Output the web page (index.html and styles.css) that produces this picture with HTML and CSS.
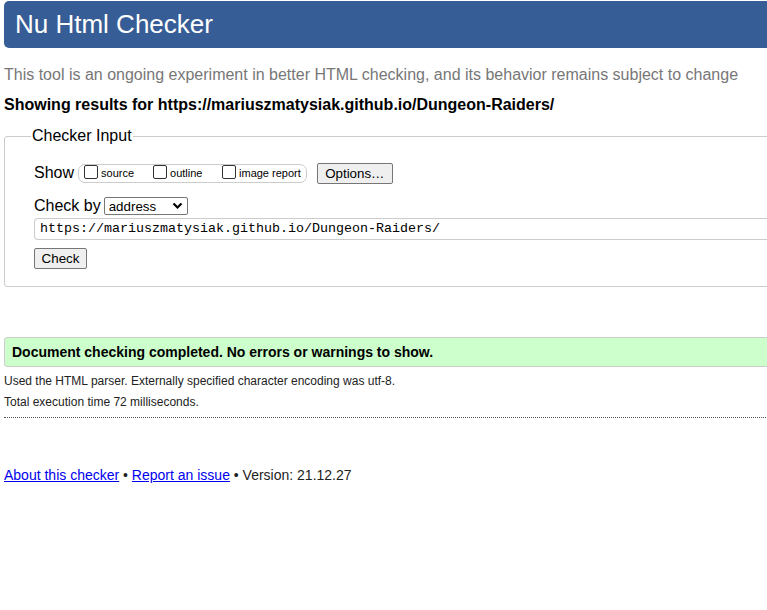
FILE: index.html
```html
<!DOCTYPE html>
<html>
<head>
<meta charset="utf-8">
<title>Nu Html Checker</title>
<link rel="stylesheet" href="styles.css">
</head>
<body>
<div class="page">
  <h1 class="title">Nu Html Checker</h1>
  <p class="intro">This tool is an ongoing experiment in better HTML checking, and its behavior remains subject to change</p>
  <p class="showing">Showing results for https://mariuszmatysiak.github.io/Dungeon-Raiders/</p>
  <fieldset class="input-box">
    <legend class="legend">Checker Input</legend>
    <div class="row show-row">
      <span class="row-label">Show</span>
      <span class="checks">
        <label class="chk"><span class="box"></span>source</label>
        <label class="chk"><span class="box"></span>outline</label>
        <label class="chk"><span class="box"></span>image report</label>
      </span>
      <button class="btn options">Options…</button>
    </div>
    <div class="row by-row">
      <span class="row-label">Check by</span>
      <span class="select">address<svg class="caret" width="11" height="8" viewBox="0 0 11 8"><path d="M1.5 1.5 L5.5 5.5 L9.5 1.5" fill="none" stroke="#000" stroke-width="2.2"/></svg></span>
    </div>
    <div class="url">https://mariuszmatysiak.github.io/Dungeon-Raiders/</div>
    <button class="btn check">Check</button>
  </fieldset>
  <div class="success">Document checking completed. No errors or warnings to show.</div>
  <p class="details">Used the HTML parser. Externally specified character encoding was utf-8.</p>
  <p class="details">Total execution time 72 milliseconds.</p>
  <hr class="dots">
  <p class="footer"><a href="#">About this checker</a> • <a href="#">Report an issue</a> • Version: 21.12.27</p>
</div>
</body>
</html>
```
FILE: styles.css
```css
html, body {
  margin: 0;
  padding: 0;
  overflow: hidden;
  background: #fff;
}
body {
  font-family: "Liberation Sans", Arial, sans-serif;
  color: #000;
}
.page {
  width: 1000px;
  padding: 1px 0 0 4px;
}
.title {
  margin: 0;
  background: #365d95;
  color: #fff;
  font-weight: normal;
  font-size: 26px;
  line-height: 47px;
  height: 47px;
  padding-left: 11px;
  border-radius: 5px;
}
.intro {
  margin: 17px 0 0;
  font-size: 16px;
  line-height: 20px;
  color: #777;
}
.showing {
  margin: 10px 0 0;
  font-size: 16px;
  line-height: 20px;
  font-weight: bold;
}
.input-box {
  margin: 12px 0 0;
  border: 1px solid #ccc;
  border-radius: 3px;
  padding: 17px 0 17px 29px;
}
.input-box .legend {
  font-size: 16px;
  padding: 0 1px;
  margin-left: -3px;
}
.row {
  display: flex;
  align-items: center;
}
.row-label {
  font-size: 16px;
}
.show-row {
  height: 22px;
}
.checks {
  display: inline-flex;
  align-items: center;
  margin-left: 4px;
  border: 1px solid #ccc;
  border-radius: 7px;
  height: 17px;
  padding: 0 5px 0 5px;
}
.chk {
  display: inline-flex;
  align-items: center;
  font-size: 11px;
  line-height: 12px;
}
.chk:nth-child(1) { width: 69px; }
.chk:nth-child(2) { width: 69px; }
.box {
  display: inline-block;
  width: 12px;
  height: 12px;
  border: 1px solid #333;
  border-radius: 2px;
  margin-right: 3px;
  margin-bottom: 2px;
}
.btn {
  font-family: "Liberation Sans", Arial, sans-serif;
  font-size: 13.33px;
  background: #efefef;
  border: 1px solid #767676;
  border-radius: 2px;
  color: #000;
  padding: 0 7px;
  height: 21px;
  line-height: 19px;
}
.options {
  margin-left: 10px;
  width: 76px;
}
.by-row {
  margin-top: 12px;
  height: 20px;
}
.select {
  display: inline-flex;
  align-items: center;
  justify-content: space-between;
  margin-left: 3px;
  width: 84px;
  height: 18px;
  box-sizing: border-box;
  border: 1px solid #767676;
  border-radius: 2px;
  padding: 0 4px 0 4px;
  font-size: 13.33px;
}
.url {
  margin-top: 2px;
  height: 22px;
  box-sizing: border-box;
  border: 1px solid #ccc;
  border-right: none;
  border-radius: 4px 0 0 4px;
  font-family: "Liberation Mono", "Courier New", monospace;
  font-size: 13.33px;
  line-height: 20px;
  padding-left: 5px;
  color: #000;
}
.check {
  display: block;
  margin-top: 8px;
  width: 53px;
  padding: 0;
  height: 21px;
}
.success {
  margin-top: 50px;
  background: #ccffcc;
  border: 1px solid #ccc;
  border-radius: 3px;
  font-weight: bold;
  font-size: 14px;
  line-height: 28px;
  padding-left: 7px;
}
.details {
  margin: 6px 0 0;
  font-size: 12px;
  line-height: 16px;
  color: #222;
}
.details + .details {
  margin-top: 5px;
}
.dots {
  margin: 7px 0 0;
  border: none;
  border-top: 1px dotted #555;
  height: 0;
}
.footer {
  margin: 48px 0 0;
  font-size: 14px;
  line-height: 18px;
  color: #222;
}
.footer a {
  color: #0000ee;
}
```
